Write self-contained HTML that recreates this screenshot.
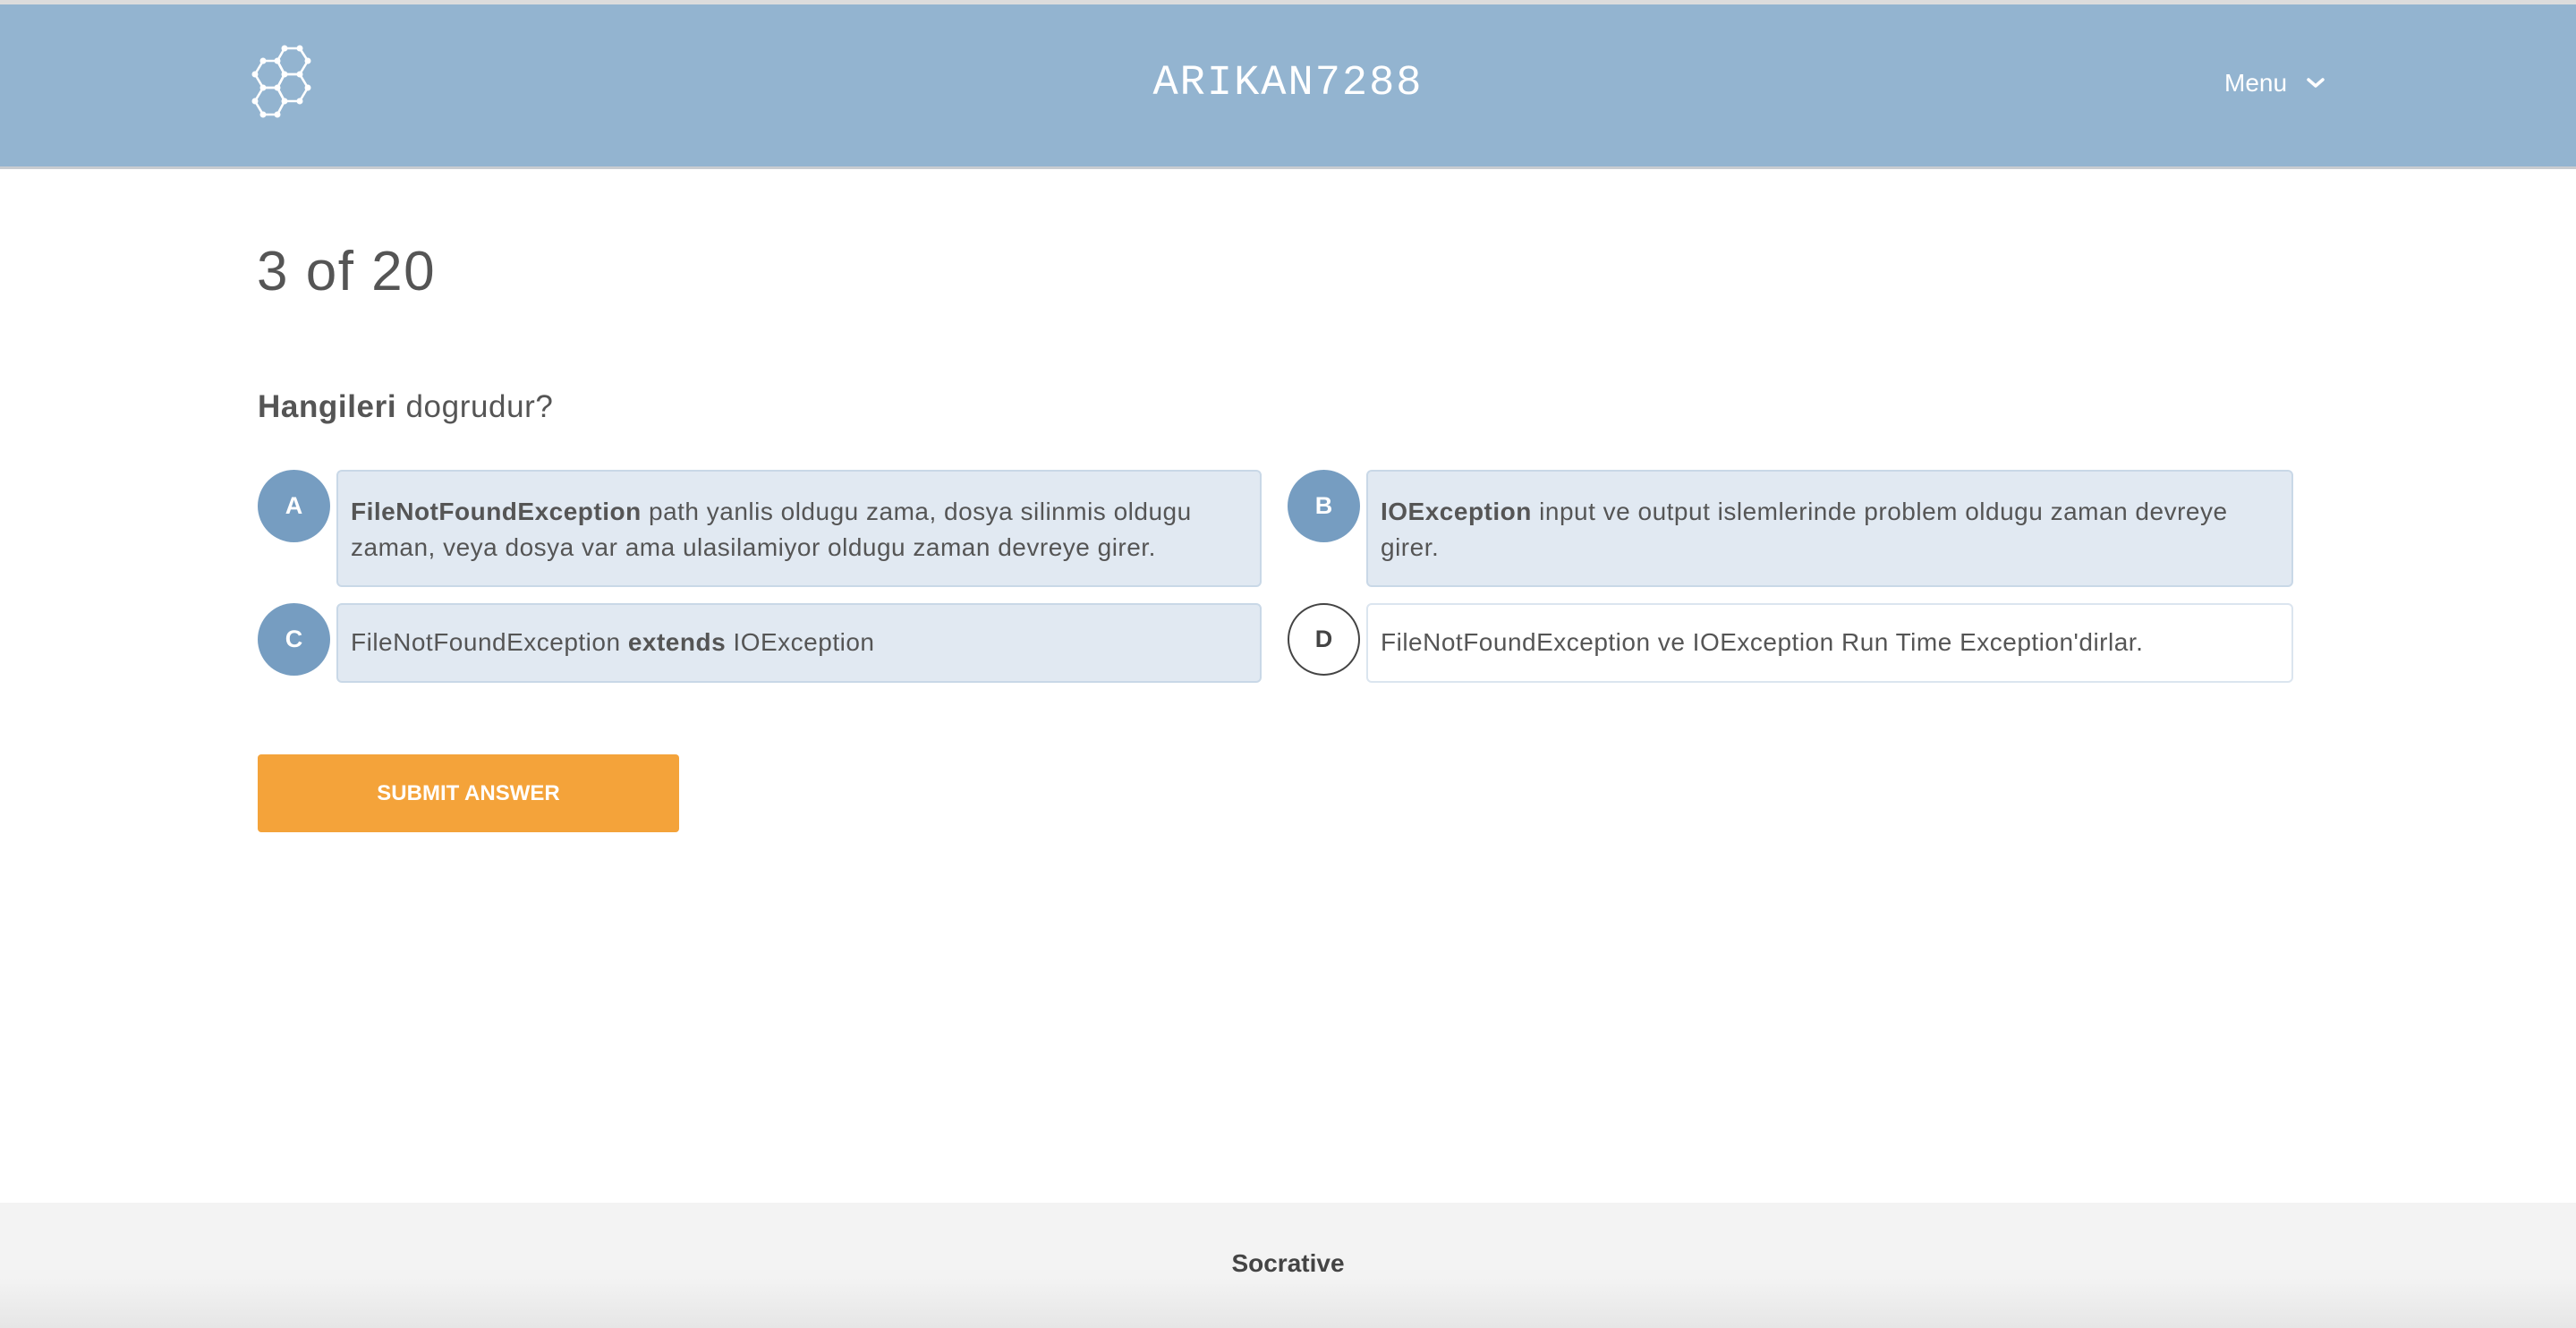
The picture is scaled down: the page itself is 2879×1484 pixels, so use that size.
<!DOCTYPE html>
<html><head><meta charset="utf-8"><style>
*{margin:0;padding:0;box-sizing:border-box}
body{width:2879px;height:1484px;position:relative;overflow:hidden;background:#fff;font-family:"Liberation Sans",sans-serif;color:#555}
.hdr{position:absolute;left:0;top:0;width:2879px;height:189px;background:#93b4d0;border-top:5px solid #dcdcdc;border-bottom:3px solid #c8ccd0}
.title{position:absolute;left:0;width:2879px;top:62px;text-align:center;font-family:"Liberation Mono",monospace;font-size:47px;color:#fff;letter-spacing:2px}
.menu{position:absolute;left:2486px;top:72px;font-size:28px;color:#fff}
.abs{position:absolute}
.circ{position:absolute;width:81px;height:81px;border-radius:50%;background:#769dc1;color:#fff;font-weight:bold;font-size:27px;text-align:center;line-height:81px}
.circ.w{background:#fff;border:2px solid #444;color:#444;line-height:77px}
.box{position:absolute;background:#e1e9f2;border:2px solid #c9d8e7;border-radius:6px;padding:22px 14px;font-size:28px;line-height:40px;letter-spacing:0.5px}
.box.w{background:#fff;border-color:#dbe5ef}
</style></head><body>
<div class="hdr">
<svg class="abs" style="left:270px;top:35px" width="100" height="100" viewBox="0 0 100 100">
<g fill="none" stroke="#fff" stroke-width="2.6" stroke-linejoin="round">
<polygon points="48,14 65,14 74,28 65,43 48,43 40,28"/>
<polygon points="24,28 40,28 48,43 40,58 24,58 15,43"/>
<polygon points="48,43 65,43 74,58 65,73 48,73 40,58"/>
<polygon points="24,58 40,58 48,73 40,88 24,88 15,73"/>
</g>
<g fill="#fff">
<circle cx="48" cy="14" r="3.5"/><circle cx="65" cy="14" r="3.5"/><circle cx="74" cy="28" r="3.5"/><circle cx="40" cy="28" r="3.5"/>
<circle cx="24" cy="28" r="3.5"/><circle cx="15" cy="43" r="3.5"/><circle cx="48" cy="43" r="3.5"/><circle cx="65" cy="43" r="3.5"/>
<circle cx="74" cy="58" r="3.5"/><circle cx="40" cy="58" r="3.5"/><circle cx="24" cy="58" r="3.5"/><circle cx="65" cy="73" r="3.5"/>
<circle cx="48" cy="73" r="3.5"/><circle cx="15" cy="73" r="3.5"/><circle cx="24" cy="88" r="3.5"/><circle cx="40" cy="88" r="3.5"/>
</g>
</svg>
<div class="title">ARIKAN7288</div>
<div class="menu">Menu</div>
<svg class="abs" style="left:2576px;top:80px" width="24" height="16" viewBox="0 0 24 16"><path d="M4 4 L12 11 L20 4" fill="none" stroke="#fff" stroke-width="3.5" stroke-linecap="round" stroke-linejoin="round"/></svg>
</div>
<div class="abs" style="left:287px;top:268px;font-size:62px;letter-spacing:1.5px">3 of 20</div>
<div class="abs" style="left:288px;top:435px;font-size:35px;letter-spacing:0.6px"><b>Hangileri</b> dogrudur?</div>

<div class="circ" style="left:288px;top:525px">A</div>
<div class="box" style="left:376px;top:525px;width:1034px;height:131px;padding-top:25px"><b>FileNotFoundException</b> path yanlis oldugu zama, dosya silinmis oldugu zaman, veya dosya var ama ulasilamiyor oldugu zaman devreye girer.</div>
<div class="circ" style="left:1439px;top:525px">B</div>
<div class="box" style="left:1527px;top:525px;width:1036px;height:131px;padding-top:25px;padding-right:40px"><b>IOException</b> input ve output islemlerinde problem oldugu zaman devreye girer.</div>
<div class="circ" style="left:288px;top:674px">C</div>
<div class="box" style="left:376px;top:674px;width:1034px;height:89px;padding-top:22px">FileNotFoundException <b>extends</b> IOException</div>
<div class="circ w" style="left:1439px;top:674px">D</div>
<div class="box w" style="left:1527px;top:674px;width:1036px;height:89px;padding-top:22px">FileNotFoundException ve IOException Run Time Exception'dirlar.</div>

<div class="abs" style="left:288px;top:843px;width:471px;height:87px;background:#f4a33a;border-radius:4px;color:#fff;font-weight:bold;font-size:24px;text-align:center;line-height:87px">SUBMIT ANSWER</div>

<div class="abs" style="left:0;top:1344px;width:2879px;height:140px;background:linear-gradient(#f3f3f3 60%,#e6e6e6)"></div>
<div class="abs" style="left:0;top:1396px;width:2879px;text-align:center;font-weight:bold;font-size:28px;color:#444">Socrative</div>
</body></html>
